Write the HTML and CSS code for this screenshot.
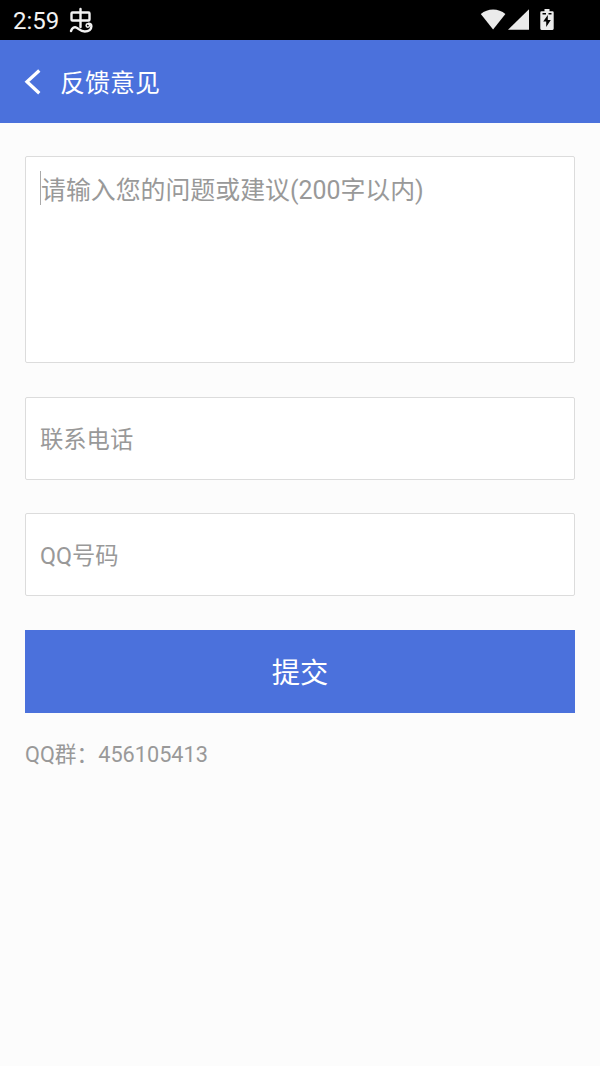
FILE: index.html
```html
<!DOCTYPE html>
<html lang="zh-CN">
<head>
<meta charset="utf-8">
<title>反馈意见</title>
<link rel="stylesheet" href="styles.css">
</head>
<body>
<div class="status-bar">
  <span class="clock">2:59</span>
  <svg class="bug-icon" width="28" height="28" viewBox="0 0 28 28" fill="none" stroke="#f2f2f2" stroke-width="2.400" stroke-linecap="round" stroke-linejoin="round">
    <path d="M5.500 6.500h16q1 0 1 1v6q0 1-1 1h-16q-1 0-1-1v-6q0-1 1-1zM13.500 3v18"/>
    <path d="M4 25c1-2.800 3.200-4.500 5.600-3.300 2.600 1.400 4 3.800 8.200 3.800 4.200 0 6.600-2.300 6.600-5.200 0-1.800-1.300-2.800-2.800-2.600"/>
    <circle cx="20.800" cy="19.500" r="1.700" stroke-width="1.500"/>
  </svg>
  <svg class="status-icons" width="76" height="26" viewBox="0 0 76 26" fill="#ebebeb">
    <path d="M.8 7.100C7.600.9 18.600.9 25.400 7.100L13.100 22.500z"/>
    <path d="M28 22.800h21V2.200z"/>
    <path fill-rule="evenodd" d="M61.500 4.200h3V2h5v2.200h3q1.200 0 1.200 1.200v16.200q0 1.400-1.200 1.400h-11q-1.200 0-1.200-1.400V5.400q0-1.200 1.200-1.200zM62.500 6v1.500h3.500V6zm6 0v1.500h3V6zM67.800 8l-4.600 6.500h3V20l4.600-7h-3z"/>
  </svg>
</div>
<header class="app-bar">
  <svg class="back" width="18" height="28" viewBox="0 0 18 28" fill="none" stroke="#fff" stroke-width="3.300"><path d="M15.300 2.500L3 13.700l12.300 11.500"/></svg>
  <h1 class="title">反馈意见</h1>
</header>
<main class="form">
  <div class="field field-message"><span class="caret"></span><span class="hint">请输入您的问题或建议(200字以内)</span></div>
  <div class="field">联系电话</div>
  <div class="field">QQ号码</div>
  <div class="submit">提交</div>
  <p class="group">QQ群：456105413</p>
</main>
</body>
</html>
```
FILE: styles.css
```css
* { box-sizing: border-box; }
body {
  margin: 0;
  min-height: 1066px;
  background: #fcfcfc;
  font-family: Roboto, "Noto Sans CJK SC", sans-serif;
}
.status-bar {
  display: flex;
  align-items: center;
  height: 40px;
  padding: 0 44px 0 13px;
  background: #000;
}
.clock {
  width: 54px;
  padding-top: 3px;
  color: #f2f2f2;
  font-size: 24px;
  line-height: 37px;
}
.status-icons { margin-left: auto; }
.app-bar {
  display: flex;
  align-items: center;
  height: 83px;
  padding-left: 24px;
  background: #4b71dc;
}
.title {
  margin: 0 0 0 18px;
  padding-top: 4px;
  color: #fff;
  font-size: 25px;
  font-weight: 400;
  line-height: 36px;
}
.form {
  display: flex;
  flex-direction: column;
  gap: 33.6px;
  padding: 33px 25px;
}
.field {
  display: flex;
  align-items: center;
  height: 83px;
  padding: 0 14px 1px;
  border: 1px solid #dcdcdc;
  border-radius: 2px;
  background: #fff;
  color: #999;
  font-size: 23.3px;
}
.field-message {
  align-items: flex-start;
  height: 207px;
  padding-top: 14px;
  font-size: 24.9px;
  line-height: 34px;
}
.hint { padding-top: 3px; }
.caret { width: 1px; height: 34px; background: #aaa; }
.submit {
  height: 83px;
  padding-top: 3px;
  background: #4b71dc;
  color: #fff;
  font-size: 28.3px;
  line-height: 81px;
  text-align: center;
}
.group {
  margin: -6px 0 0;
  color: #999;
  font-size: 21.7px;
  line-height: 30px;
}
```
